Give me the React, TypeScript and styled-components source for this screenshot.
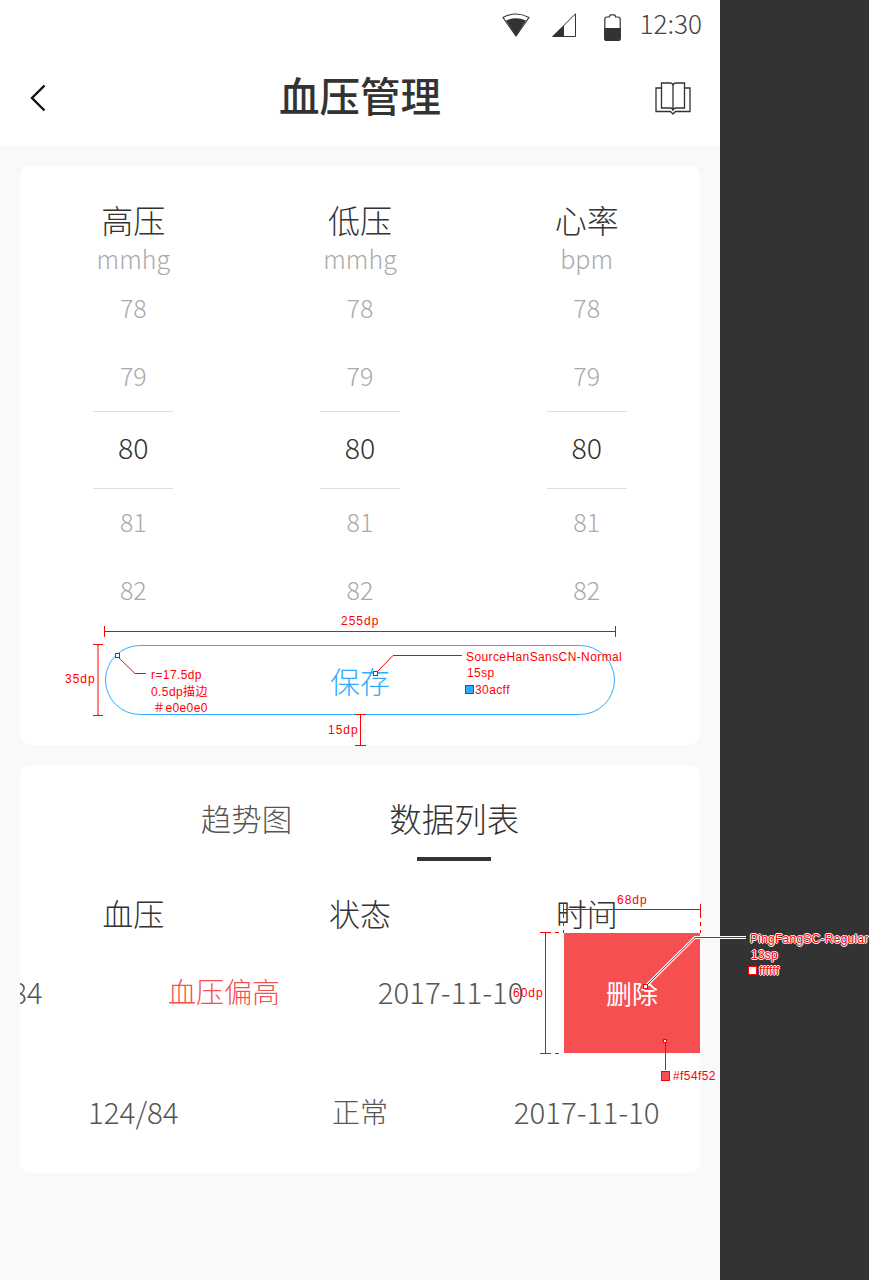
import React from 'react';
import styled, { createGlobalStyle } from 'styled-components';

const RED = '#ff0000';
const BLUE = '#30acff';
const CJK = '"Noto Sans CJK SC", "Noto Sans", sans-serif';

const GlobalStyle = createGlobalStyle`
  html, body {
    margin: 0;
    padding: 0;
    background: #333333;
  }
  * {
    box-sizing: border-box;
  }
`;

const Page = styled.div`
  position: relative;
  display: flex;
  width: 869px;
  height: 1280px;
  overflow: hidden;
  font-family: ${CJK};
  font-weight: 300;
  color: #333333;
`;

const Phone = styled.div`
  width: 720px;
  height: 1280px;
  background: #f9f9f9;
`;

const Gutter = styled.div`
  flex: 1;
  background: #333333;
`;

const Header = styled.header`
  height: 146px;
  background: #ffffff;
`;

const StatusBar = styled.div`
  display: flex;
  align-items: center;
  justify-content: flex-end;
  height: 50px;
  padding-right: 18px;
`;

const StatusIcon = styled.svg<{ $gap: number; $drop?: number }>`
  display: block;
  flex: none;
  margin-left: ${({ $gap }) => $gap}px;
  margin-top: ${({ $drop }) => $drop ?? 0}px;
`;

const Clock = styled.span`
  height: 50px;
  margin-left: 18px;
  font-size: 26.2px;
  line-height: 46px;
  color: #444444;
`;

const NavBar = styled.div`
  display: flex;
  align-items: center;
  justify-content: space-between;
  height: 96px;
  padding: 0 29px;
`;

const NavSlot = styled.div<{ $end?: boolean }>`
  display: flex;
  justify-content: ${({ $end }) => ($end ? 'flex-end' : 'flex-start')};
  width: 40px;
`;

const NavTitle = styled.h1`
  height: 96px;
  margin: 0;
  font-size: 40.5px;
  line-height: 90px;
  font-weight: 500;
  color: #333333;
`;

const Content = styled.main`
  display: flex;
  flex-direction: column;
  gap: 20px;
  padding: 20px;
`;

const Card = styled.section`
  background: #ffffff;
  border-radius: 10px;
  overflow: hidden;
`;

const PickerCard = styled(Card)`
  padding: 34px 0 30px;
`;

const Columns = styled.div`
  display: grid;
  grid-template-columns: repeat(3, 1fr);
`;

const PickerColumn = styled.div`
  display: flex;
  flex-direction: column;
  align-items: center;
`;

const ColumnTitle = styled.div`
  height: 44px;
  font-size: 32px;
  line-height: 38px;
  color: #333333;
`;

const ColumnUnit = styled.div`
  height: 31px;
  font-size: 25px;
  line-height: 28px;
  color: #aaaaaa;
`;

const PickerValue = styled.div`
  display: flex;
  align-items: center;
  justify-content: center;
  height: 68px;
  padding-bottom: 5px;
  font-size: 25px;
  color: #aaaaaa;
`;

const SelectedValue = styled.div`
  display: flex;
  align-items: center;
  justify-content: center;
  width: 80px;
  height: 78px;
  padding-bottom: 7px;
  border-top: 1px solid #e0e0e0;
  border-bottom: 1px solid #e0e0e0;
  font-size: 28.5px;
  color: #333333;
`;

const SaveButton = styled.button`
  display: block;
  width: 510px;
  height: 70px;
  margin: 20px auto 0;
  padding: 0;
  border: 1px solid ${BLUE};
  border-radius: 35px;
  background: #ffffff;
  font-family: inherit;
  font-weight: 300;
  font-size: 30px;
  color: ${BLUE};
`;

const ListCard = styled(Card)`
  padding-top: 31px;
`;

const Tabs = styled.div`
  display: flex;
  justify-content: center;
  gap: 97px;
`;

const Tab = styled.div<{ $active?: boolean }>`
  display: flex;
  flex-direction: column;
  align-items: center;
  font-size: ${({ $active }) => ($active ? '32.5px' : '30.5px')};
  line-height: 44px;
  color: ${({ $active }) => ($active ? '#333333' : '#555555')};
`;

const TabMark = styled.div`
  width: 74px;
  height: 4px;
  margin-top: 17px;
  background: #333333;
`;

const TableHead = styled.div`
  display: grid;
  grid-template-columns: repeat(3, 1fr);
  height: 36px;
  margin-top: 36px;
  text-align: center;
  font-size: 31px;
  line-height: 32px;
  color: #333333;
`;

const Swipe = styled.div<{ $offset: number }>`
  display: flex;
  height: 120px;
  margin-left: ${({ $offset }) => -$offset}px;
`;

const Cell = styled.div<{ $alert?: boolean; $label?: boolean }>`
  display: flex;
  flex: none;
  align-items: center;
  justify-content: center;
  width: 226.67px;
  padding-bottom: 5px;
  font-size: ${({ $label }) => ($label ? '28px' : '29.5px')};
  color: ${({ $alert }) => ($alert ? '#f54f52' : '#555555')};
`;

const DeleteAction = styled.button`
  flex: none;
  width: 136px;
  height: 120px;
  padding: 0 0 2px;
  border: 0;
  background: #f54f52;
  font-family: inherit;
  font-weight: 400;
  font-size: 26px;
  color: #ffffff;
`;

const Overlay = styled.svg`
  position: absolute;
  top: 0;
  left: 0;
  pointer-events: none;
`;

const Note = styled.span<{ $x: number; $y: number; $halo?: boolean; $wide?: boolean }>`
  position: absolute;
  left: ${({ $x }) => $x}px;
  top: ${({ $y }) => $y}px;
  font-family: "Liberation Sans", "Noto Sans CJK SC", sans-serif;
  font-weight: 400;
  font-size: 12px;
  line-height: 14px;
  letter-spacing: ${({ $wide, $halo }) => ($wide ? '1px' : $halo ? '0.25px' : '0.4px')};
  white-space: nowrap;
  color: ${RED};
  text-shadow: ${({ $halo }) =>
    $halo ? '1px 0 #fff, -1px 0 #fff, 0 1px #fff, 0 -1px #fff' : 'none'};
`;

const columns = [
  { title: '高压', unit: 'mmhg' },
  { title: '低压', unit: 'mmhg' },
  { title: '心率', unit: 'bpm' },
];

const WifiIcon = () => (
  <StatusIcon $gap={0} width="28" height="24" viewBox="0 0 28 24">
    <path d="M1 4.5 Q14 -2.5 27 4.5 L14 23 Z" fill="#fff" stroke="#333" strokeWidth="1.2" strokeLinejoin="round" />
    <path d="M4 7.5 Q14 3 24 7.5 L14 23 Z" fill="#333" />
  </StatusIcon>
);

const SignalIcon = () => (
  <StatusIcon $gap={22} width="24" height="24" viewBox="0 0 24 24">
    <path d="M23.5 0.8 V23.5 H0.8 Z" fill="#fff" stroke="#333" strokeWidth="1" />
    <path d="M12 12.2 V24 H0 Z" fill="#333" />
  </StatusIcon>
);

const BatteryIcon = () => (
  <StatusIcon $gap={28} $drop={5} width="17" height="27" viewBox="0 0 17 27">
    <path d="M5.5 2.2 Q5.5 0.8 7 0.8 H10 Q11.5 0.8 11.5 2.2 V3 H14 Q16.2 3 16.2 5.2 V24.5 Q16.2 26.2 14.5 26.2 H2.5 Q0.8 26.2 0.8 24.5 V5.2 Q0.8 3 3 3 H5.5 Z" fill="#fff" stroke="#333" strokeWidth="1.2" />
    <path d="M0.2 14 H16.8 V24.5 Q16.8 27 14.5 27 H2.5 Q0.2 27 0.2 24.5 Z" fill="#333" />
  </StatusIcon>
);

const BackIcon = () => (
  <svg width="18" height="28" viewBox="0 0 18 28" fill="none">
    <path d="M15.5 1.5 L3 14 L15.5 26.5" stroke="#111" strokeWidth="2.4" />
  </svg>
);

const BookIcon = () => (
  <svg width="36" height="33" viewBox="0 0 36 33" fill="none" stroke="#333" strokeWidth="1.3">
    <path d="M18 4 Q18 1 15 1 H6.5 V26 H15 Q18 26 18 28.5 Q18 26 21 26 H29.5 V1 H21 Q18 1 18 4 Z" />
    <path d="M18 4 V28.5" />
    <path d="M6.5 6 H1 V29.5 H15.5 L18 32 L20.5 29.5 H35 V6 H29.5" />
  </svg>
);

const Dimension = ({ d }: { d: string }) => <path d={d} fill="none" stroke={RED} strokeWidth="1" />;

const Annotations = () => (
  <>
    <Overlay width="869" height="1280" viewBox="0 0 869 1280">
      <Dimension d="M104.5 626 V637 M104.5 631.5 H615.5 M615.5 626 V637" />
      <Dimension d="M93 644.5 H103 M98 644.5 V715.5 M93 715.5 H103" />
      <Dimension d="M355 714.5 H366 M360.5 714.5 V745.5 M355 745.5 H366" />
      <rect x="115.5" y="653.5" width="4" height="4" fill="#fff" stroke={RED} />
      <Dimension d="M119 658 L135 673.5 H146" />
      <rect x="373.5" y="671.5" width="4" height="4" fill="#fff" stroke={RED} />
      <Dimension d="M378 671 L393 655.5 H462" />
      <rect x="465.5" y="685.5" width="8" height="8" fill={BLUE} stroke={RED} />

      <Dimension d="M563.5 904 V914 M563.5 909.5 H700.5 M700.5 904 V914" />
      <path d="M563.5 914 V933 M700.5 914 V933" stroke={RED} strokeDasharray="4 4" />
      <Dimension d="M540 932.5 H551 M545.5 932.5 V1053.5 M540 1053.5 H551 M555 932.5 H559 M555 1053.5 H559" />

      <path d="M646 986 L695 937.5 H746" fill="none" stroke="#fff" strokeWidth="3" />
      <Dimension d="M646 986 L695 937.5 H746" />
      <rect x="643.5" y="984.5" width="4" height="4" fill="#fff" stroke={RED} />
      <rect x="748.5" y="966.5" width="8" height="8" fill="#fff" stroke={RED} />

      <rect x="663.5" y="1039.5" width="3" height="3" fill="#fff" stroke={RED} />
      <Dimension d="M665.5 1043 V1070" />
      <rect x="661.5" y="1071.5" width="8" height="9" fill="#f54f52" stroke={RED} />
    </Overlay>
    <Note $x={341} $y={614} $wide>255dp</Note>
    <Note $x={65} $y={672} $wide>35dp</Note>
    <Note $x={151} $y={668}>r=17.5dp</Note>
    <Note $x={151} $y={685}>0.5dp描边</Note>
    <Note $x={153} $y={701}>＃e0e0e0</Note>
    <Note $x={466} $y={650}>SourceHanSansCN-Normal</Note>
    <Note $x={467} $y={666}>15sp</Note>
    <Note $x={475} $y={683}>30acff</Note>
    <Note $x={328} $y={723} $wide>15dp</Note>
    <Note $x={617} $y={893} $wide>68dp</Note>
    <Note $x={513} $y={986} $wide>60dp</Note>
    <Note $x={750} $y={932} $halo>PingFangSC-Regular</Note>
    <Note $x={751} $y={948} $halo>13sp</Note>
    <Note $x={759} $y={964} $halo>ffffff</Note>
    <Note $x={673} $y={1069}>#f54f52</Note>
  </>
);

export default function App() {
  return (
    <Page>
      <GlobalStyle />
      <Phone>
        <Header>
          <StatusBar>
            <WifiIcon />
            <SignalIcon />
            <BatteryIcon />
            <Clock>12:30</Clock>
          </StatusBar>
          <NavBar>
            <NavSlot>
              <BackIcon />
            </NavSlot>
            <NavTitle>血压管理</NavTitle>
            <NavSlot $end>
              <BookIcon />
            </NavSlot>
          </NavBar>
        </Header>
        <Content>
          <PickerCard>
            <Columns>
              {columns.map((col) => (
                <PickerColumn key={col.title}>
                  <ColumnTitle>{col.title}</ColumnTitle>
                  <ColumnUnit>{col.unit}</ColumnUnit>
                  <PickerValue>78</PickerValue>
                  <PickerValue>79</PickerValue>
                  <SelectedValue>80</SelectedValue>
                  <PickerValue>81</PickerValue>
                  <PickerValue>82</PickerValue>
                </PickerColumn>
              ))}
            </Columns>
            <SaveButton>保存</SaveButton>
          </PickerCard>
          <ListCard>
            <Tabs>
              <Tab>趋势图</Tab>
              <Tab $active>
                数据列表
                <TabMark />
              </Tab>
            </Tabs>
            <TableHead>
              <div>血压</div>
              <div>状态</div>
              <div>时间</div>
            </TableHead>
            <Swipe $offset={136}>
              <Cell>124/84</Cell>
              <Cell $alert $label>血压偏高</Cell>
              <Cell>2017-11-10</Cell>
              <DeleteAction>删除</DeleteAction>
            </Swipe>
            <Swipe $offset={0}>
              <Cell>124/84</Cell>
              <Cell $label>正常</Cell>
              <Cell>2017-11-10</Cell>
            </Swipe>
          </ListCard>
        </Content>
      </Phone>
      <Gutter />
      <Annotations />
    </Page>
  );
}
